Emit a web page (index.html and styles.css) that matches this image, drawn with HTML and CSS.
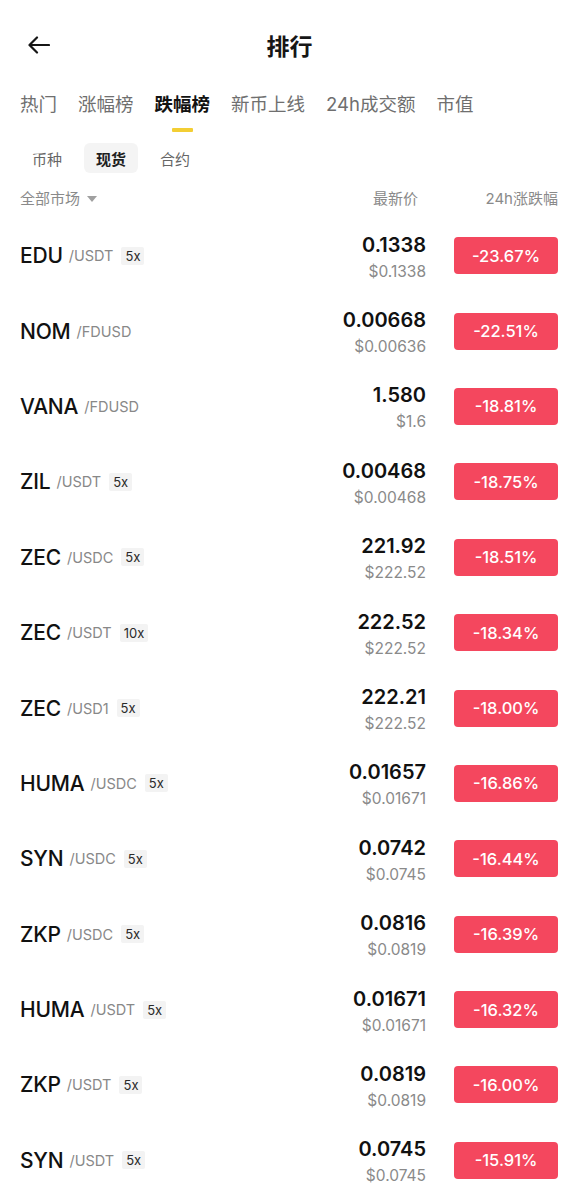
FILE: index.html
```html
<!DOCTYPE html>
<html lang="zh">
<head>
<meta charset="utf-8">
<title>排行</title>
<link rel="stylesheet" href="styles.css">
</head>
<body>
<div class="page">
  <header class="topbar">
    <div class="back">
      <svg width="22" height="18" viewBox="0 0 22 18" fill="none" stroke="#161616" stroke-width="2.2" stroke-linecap="round" stroke-linejoin="round"><path d="M21 9H2"/><path d="M9 1.5L1.5 9L9 16.5"/></svg>
    </div>
    <h1 class="title">排行</h1>
    <div></div>
  </header>

  <nav class="tabs">
    <div class="tab">热门</div>
    <div class="tab">涨幅榜</div>
    <div class="tab active">跌幅榜<span class="ind"></span></div>
    <div class="tab">新币上线</div>
    <div class="tab">24h成交额</div>
    <div class="tab">市值</div>
  </nav>

  <div class="subtabs">
    <div class="sub">币种</div>
    <div class="sub active">现货</div>
    <div class="sub">合约</div>
  </div>

  <div class="colhead">
    <div class="market">全部市场<span class="caret"></span></div>
    <div class="h-price">最新价</div>
    <div class="h-chg">24h涨跌幅</div>
  </div>

  <ul class="list">
    <li class="row"><div class="sym"><span class="base">EDU</span><span class="quote">/USDT</span><span class="lev">5x</span></div><div class="price"><div class="p1">0.1338</div><div class="p2">$0.1338</div></div><div class="chg">-23.67%</div></li>
    <li class="row"><div class="sym"><span class="base">NOM</span><span class="quote">/FDUSD</span></div><div class="price"><div class="p1">0.00668</div><div class="p2">$0.00636</div></div><div class="chg">-22.51%</div></li>
    <li class="row"><div class="sym"><span class="base">VANA</span><span class="quote">/FDUSD</span></div><div class="price"><div class="p1">1.580</div><div class="p2">$1.6</div></div><div class="chg">-18.81%</div></li>
    <li class="row"><div class="sym"><span class="base">ZIL</span><span class="quote">/USDT</span><span class="lev">5x</span></div><div class="price"><div class="p1">0.00468</div><div class="p2">$0.00468</div></div><div class="chg">-18.75%</div></li>
    <li class="row"><div class="sym"><span class="base">ZEC</span><span class="quote">/USDC</span><span class="lev">5x</span></div><div class="price"><div class="p1">221.92</div><div class="p2">$222.52</div></div><div class="chg">-18.51%</div></li>
    <li class="row"><div class="sym"><span class="base">ZEC</span><span class="quote">/USDT</span><span class="lev">10x</span></div><div class="price"><div class="p1">222.52</div><div class="p2">$222.52</div></div><div class="chg">-18.34%</div></li>
    <li class="row"><div class="sym"><span class="base">ZEC</span><span class="quote">/USD1</span><span class="lev">5x</span></div><div class="price"><div class="p1">222.21</div><div class="p2">$222.52</div></div><div class="chg">-18.00%</div></li>
    <li class="row"><div class="sym"><span class="base">HUMA</span><span class="quote">/USDC</span><span class="lev">5x</span></div><div class="price"><div class="p1">0.01657</div><div class="p2">$0.01671</div></div><div class="chg">-16.86%</div></li>
    <li class="row"><div class="sym"><span class="base">SYN</span><span class="quote">/USDC</span><span class="lev">5x</span></div><div class="price"><div class="p1">0.0742</div><div class="p2">$0.0745</div></div><div class="chg">-16.44%</div></li>
    <li class="row"><div class="sym"><span class="base">ZKP</span><span class="quote">/USDC</span><span class="lev">5x</span></div><div class="price"><div class="p1">0.0816</div><div class="p2">$0.0819</div></div><div class="chg">-16.39%</div></li>
    <li class="row"><div class="sym"><span class="base">HUMA</span><span class="quote">/USDT</span><span class="lev">5x</span></div><div class="price"><div class="p1">0.01671</div><div class="p2">$0.01671</div></div><div class="chg">-16.32%</div></li>
    <li class="row"><div class="sym"><span class="base">ZKP</span><span class="quote">/USDT</span><span class="lev">5x</span></div><div class="price"><div class="p1">0.0819</div><div class="p2">$0.0819</div></div><div class="chg">-16.00%</div></li>
    <li class="row"><div class="sym"><span class="base">SYN</span><span class="quote">/USDT</span><span class="lev">5x</span></div><div class="price"><div class="p1">0.0745</div><div class="p2">$0.0745</div></div><div class="chg">-15.91%</div></li>
  </ul>
</div>
</body>
</html>
```

FILE: styles.css
```css
* { box-sizing: border-box; }
html, body { margin: 0; padding: 0; background: #fff; }
body {
  font-family: Inter, "Noto Sans CJK SC", sans-serif;
  color: #141414;
}
.page { width: 579px; overflow: hidden; }

.topbar {
  height: 90px;
  display: grid;
  grid-template-columns: 1fr auto 1fr;
  align-items: center;
  padding: 0 20px;
}
.back { display: flex; align-items: center; height: 20px; padding-left: 8px; }
.back svg { display: block; }
.title {
  margin: 0;
  font-family: "Noto Sans CJK SC", sans-serif;
  font-size: 23px;
  font-weight: 700;
  line-height: 30px;
  color: #161616;
}

.tabs {
  display: flex;
  gap: 21px;
  padding: 0 20px;
  height: 53px;
}
.tab {
  position: relative;
  font-size: 18.5px;
  line-height: 28px;
  color: #6f6f6f;
  white-space: nowrap;
}
.tab.active { color: #121212; font-weight: 700; }
.ind {
  position: absolute;
  left: 50%;
  top: 38px;
  width: 21px;
  height: 4px;
  margin-left: -10px;
  background: #f3ce34;
  border-radius: 1px;
}

.subtabs {
  display: flex;
  gap: 10px;
  padding: 0 8px 0 20px;
}
.sub {
  height: 30px;
  padding: 0 12px;
  display: flex;
  align-items: center;
  font-family: "Noto Sans CJK SC", sans-serif;
  font-size: 15px;
  color: #666;
  border-radius: 6px;
}
.sub.active {
  background: #f4f4f4;
  color: #1e1e1e;
  font-weight: 700;
}

.colhead {
  display: flex;
  align-items: center;
  padding: 17px 21px 10px 20px;
  height: 45px;
  font-size: 15px;
  color: #8a8a8a;
  line-height: 18px;
}
.market { flex: 1; display: flex; align-items: center; }
.caret {
  width: 0; height: 0;
  margin-left: 7px;
  border-left: 5px solid transparent;
  border-right: 5px solid transparent;
  border-top: 6px solid #a0a0a0;
}
.h-price { margin-right: 36px; }
.h-chg { width: 104px; text-align: right; }

.list { list-style: none; margin: 0; padding: 0; }
.row {
  height: 75.4px;
  display: flex;
  align-items: center;
  padding: 0 21px 0 20px;
}
.sym { flex: 1; display: flex; align-items: center; }
.base {
  font-size: 21px;
  font-weight: 500;
  color: #111;
  letter-spacing: -0.2px;
}
.quote {
  margin-left: 6px;
  font-size: 14.5px;
  color: #888;
}
.lev {
  margin-left: 8px;
  font-size: 13px;
  line-height: 18px;
  padding: 0 4px;
  background: #f3f3f3;
  color: #2a2a2a;
  border-radius: 2px;
}
.price {
  text-align: right;
  padding-top: 4px;
}
.p1 {
  font-size: 20px;
  font-weight: 600;
  line-height: 24px;
  color: #111;
}
.p2 {
  margin-top: 4px;
  font-size: 15.5px;
  line-height: 22px;
  color: #8a8a8a;
}
.chg {
  margin-left: 28px;
  width: 104px;
  height: 37px;
  border-radius: 4px;
  background: #f4475e;
  color: #fff;
  font-size: 16.5px;
  font-weight: 500;
  display: flex;
  align-items: center;
  justify-content: center;
}
```
